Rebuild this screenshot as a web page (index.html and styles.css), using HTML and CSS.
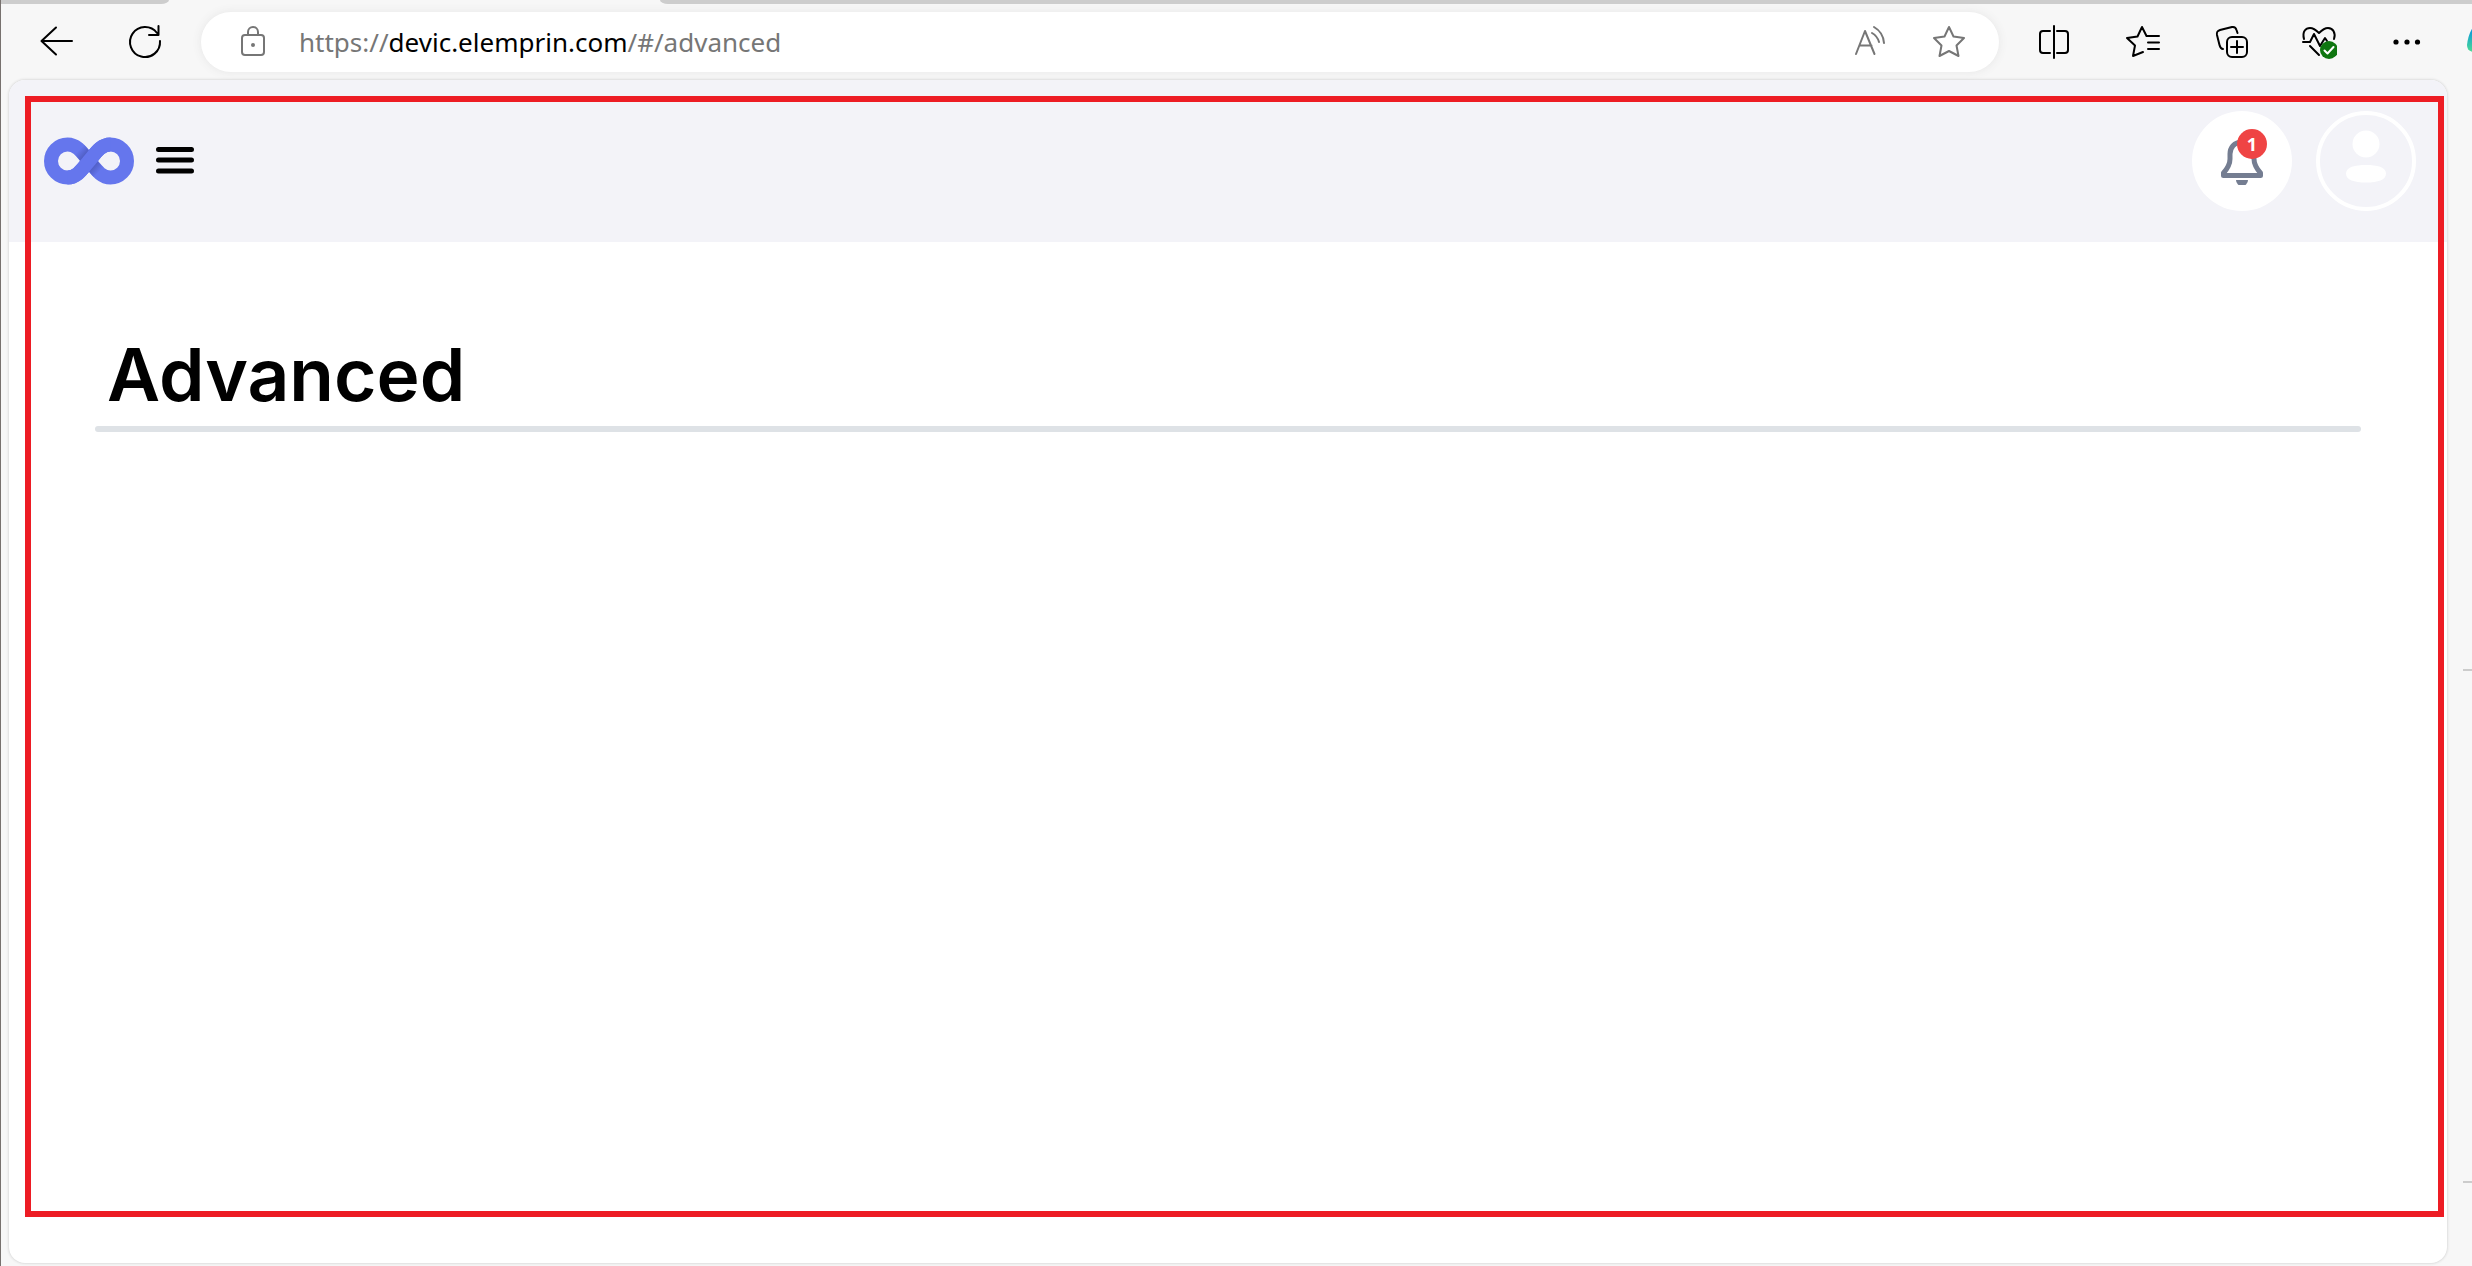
FILE: index.html
```html
<!DOCTYPE html>
<html lang="en">
<head>
<meta charset="utf-8">
<title>Advanced</title>
<link rel="stylesheet" href="styles.css">
</head>
<body>
<div class="tabstrip"><span class="tab-left"></span><span class="tab-right"></span></div>
<nav class="toolbar" aria-label="Browser">
  <button class="tool" aria-label="Back"><svg width="36" height="36" viewBox="0 0 36 36"><path d="M33 17H2.500M17 3.500L2.500 17L17 30.500"/></svg></button>
  <button class="tool" aria-label="Refresh"><svg width="36" height="36" viewBox="0 0 36 36"><path d="M33 17A15 15 0 1 1 30 9M31.500 2V11H22"/></svg></button>
  <div class="address">
    <button class="site" aria-label="Site information"><svg width="36" height="36" viewBox="0 0 36 36"><rect x="7" y="11" width="22" height="20" rx="3"/><path d="M13 11V8a5 5 0 0 1 10 0V11"/><circle class="solid" cx="18" cy="21" r="2"/></svg></button>
    <div class="url" role="textbox" contenteditable="true" spellcheck="false" aria-label="Address">https://<span class="host">devic.elemprin.com</span>/#/advanced</div>
    <button class="action" aria-label="Read aloud"><svg width="36" height="36" viewBox="-2 0 36 36"><path d="M3 30L12 7L21.500 30M6.500 21.500H18.500M19 9a15 15 0 0 1 7 9M21 3a20 20 0 0 1 10 16"/></svg></button>
    <button class="action" aria-label="Add to favorites"><svg width="36" height="36" viewBox="0 0 36 36"><path d="M18 3L22.500 12.500L33 14L25.500 21.500L27.500 32L18 27L8.500 32L10.500 21.500L3 14L13.500 12.500Z"/></svg></button>
  </div>
  <button class="tool" aria-label="Split screen"><svg width="36" height="36" viewBox="0 0 36 36"><path d="M18 2V34M14 7H7a3 3 0 0 0-3 3V26a3 3 0 0 0 3 3H14M21 7H29a3 3 0 0 1 3 3V26a3 3 0 0 1-3 3H21"/></svg></button>
  <button class="tool" aria-label="Favorites"><svg width="36" height="36" viewBox="-1 0 36 36"><path d="M18 28L8 32L10 21.500L2 14L12.500 12.500L17 3L21.500 12H34M23 18.500H34M23 25H34"/></svg></button>
  <button class="tool" aria-label="Collections"><svg width="36" height="36" viewBox="-2 0 36 36"><path d="M9 25C7 25 6 23 5.500 21L3 11C2.500 8 3 7 6 6L18 3C21 2.500 22 4 22.500 6L23.500 9"/><rect x="13" y="13" width="20" height="20" rx="5"/><path d="M23 17V29M17 23H29"/></svg></button>
  <button class="tool" aria-label="Browser essentials"><svg width="38" height="36" viewBox="-2 0 38 36"><path d="M3 15C1 7 5 4 9 4C13 4 16 7 18 9C20 7 23 4 27 4C32 4 35 9 33 15M2 18H9L13 10L19 22L24 14L26 17M9 22L18 31"/><circle class="ok" cx="28" cy="26" r="9"/><path class="tick" d="M23.500 26.500L26.500 29.500L32.500 23"/></svg></button>
  <button class="tool" aria-label="Settings and more"><svg width="36" height="36" viewBox="-2 0 36 36"><g class="solid"><circle cx="6" cy="18" r="2.600"/><circle cx="17" cy="18" r="2.600"/><circle cx="27.500" cy="18" r="2.600"/></g></svg></button>
  <button class="copilot" aria-label="Copilot"><svg width="36" height="36" viewBox="0 0 36 36"><defs><linearGradient id="cp" x2="0" y2="1"><stop offset="0.200" stop-color="#0b9bd8"/><stop offset="1" stop-color="#4cdb93"/></linearGradient></defs><path fill="url(#cp)" stroke="none" d="M9 1H30V28H8Q0 28 0 21Q1 11 6 3Z"/></svg></button>
</nav>
<div class="workspace">
  <div class="page">
    <header class="header">
      <a class="logo" href="#/" aria-label="Home"><svg width="90" height="48" viewBox="0 0 90 48">
        <defs>
          <linearGradient id="fold-a" gradientUnits="userSpaceOnUse" x1="42" y1="21" x2="34" y2="14"><stop offset="0" stop-color="#4a57b8"/><stop offset="1" stop-color="#6576ed"/></linearGradient>
          <linearGradient id="fold-b" gradientUnits="userSpaceOnUse" x1="48" y1="27" x2="56" y2="34"><stop offset="0" stop-color="#4a57b8"/><stop offset="1" stop-color="#6576ed"/></linearGradient>
        </defs>
        <path class="strand" d="M23.500 7.500A16.500 16.500 0 0 0 23.500 40.500C33 40.500 38 32.500 45 24C52 15.500 57 7.500 66.500 7.500A16.500 16.500 0 0 1 66.500 40.500C57 40.500 52 32.500 45 24C38 15.500 33 7.500 23.500 7.500Z"/>
        <path class="shade" stroke="url(#fold-a)" d="M35.500 12.500L45 24"/>
        <path class="shade" stroke="url(#fold-b)" d="M45 24L54.500 35.500"/>
        <path class="strand" d="M23.500 40.500C33 40.500 38 32.500 45 24C52 15.500 57 7.500 66.500 7.500"/>
      </svg></a>
      <button class="menu" aria-label="Menu"><svg width="38" height="28" viewBox="0 0 38 28"><path d="M2.500 3.500H35.500M2.500 14H35.500M2.500 25H35.500"/></svg></button>
      <button class="round bell" aria-label="Notifications"><svg width="44" height="48" viewBox="0 0 44 48"><path class="bell-body" d="M22 5C14 5 10 11 10 17V22C10 28 7 32 3.500 36V38.500H40.500V36C37 32 34 28 34 22V17C34 11 30 5 22 5Z"/><path class="clapper" d="M16 43H28A6 6 0 0 1 16 43Z"/></svg><span class="badge">1</span></button>
      <button class="round avatar" aria-label="Account"><svg width="42" height="54" viewBox="0 0 42 54"><circle cx="21" cy="14" r="13.500"/><path d="M21 35C32 35 41 37 41 43.500S33 52.500 21 52.500S1 50 1 43.500S10 35 21 35Z"/></svg></button>
    </header>
    <main class="content">
      <h1>Advanced</h1>
      <hr>
    </main>
    <div class="frame"></div>
  </div>
  <aside class="side"><span></span><span></span></aside>
</div>
</body>
</html>
```
FILE: styles.css
```css
* { box-sizing: border-box; }
body {
  margin: 0;
  min-height: 100vh;
  display: flex;
  flex-direction: column;
  background: #f7f7f7;
  border-left: 1px solid #77716e;
  font-family: "Noto Sans", "Open Sans", sans-serif;
}
button {
  padding: 0;
  border: 0;
  background: none;
  color: inherit;
  font: inherit;
  display: flex;
  align-items: center;
  justify-content: center;
  flex-shrink: 0;
}
svg { display: block; flex-shrink: 0; }
.tabstrip { display: flex; justify-content: space-between; height: 4px; }
.tabstrip span { background: #cdcdcd; }
.tab-left { width: 168px; border-bottom-right-radius: 8px 4px; }
.tab-right { width: calc(100% - 659px); border-bottom-left-radius: 8px 4px; }

.toolbar {
  display: flex;
  align-items: center;
  height: 76px;
  padding-left: 12px;
  overflow: hidden;
}
.toolbar svg {
  fill: none;
  stroke: currentColor;
  stroke-width: 2;
  stroke-linejoin: round;
  stroke-linecap: round;
}
.toolbar .solid { fill: currentColor; stroke: none; }
.toolbar .ok { fill: #0f7610; stroke: none; }
.toolbar .tick { stroke: #fff; stroke-width: 2; }
.tool { width: 88px; height: 60px; color: #000; }
.copilot { width: 22px; height: 60px; justify-content: flex-start; padding-left: 17px; }
.address {
  flex: 1;
  display: flex;
  align-items: center;
  height: 60px;
  margin: 0 11px 0 12px;
  padding: 0 10px 0 12px;
  border-radius: 30px;
  background: #fff;
  color: #767676;
  box-shadow: 0 0 10px #e6e6e6;
}
.site { width: 80px; height: 60px; }
.url { flex: 1; padding-left: 6px; font-size: 26px; line-height: 36px; white-space: nowrap; outline: 0; }
.host { color: #000; }
.action { width: 80px; height: 60px; }

.workspace { flex: 1; display: flex; padding: 0 0 3px 8px; }
.page {
  position: relative;
  flex: 1;
  min-width: 0;
  overflow: hidden;
  border-radius: 16px;
  background: #fff;
  box-shadow: 0 0 3px #c4c4c4;
}
.side { width: 25px; display: flex; flex-direction: column; align-items: flex-end; gap: 510px; padding-top: 589px; }
.side span { width: 9px; height: 2px; background: #ccc; }
.frame { position: absolute; inset: 16px 3px 46px 16px; border: 6px solid #ed1c24; pointer-events: none; }

.header {
  display: flex;
  align-items: center;
  height: 162px;
  padding: 0 31px 0 35px;
  background: #f3f3f8;
}
.strand { fill: none; stroke: #6576ed; stroke-width: 14; }
.shade { fill: none; stroke-width: 13; }
.menu { margin: 0 auto 0 22px; padding-bottom: 3px; }
.menu svg { stroke: #000; stroke-width: 5; stroke-linecap: round; }
.round { position: relative; width: 100px; height: 100px; border-radius: 50%; }
.bell { background: #fff; margin-right: 24px; }
.bell-body { fill: none; stroke: #747d91; stroke-width: 5; stroke-linejoin: round; }
.clapper { fill: #747d91; }
.badge {
  position: absolute;
  top: 18px;
  left: 45px;
  width: 30px;
  height: 30px;
  border-radius: 50%;
  background: #ef4444;
  color: #fff;
  font-size: 18px;
  font-weight: 700;
  line-height: 30px;
  text-align: center;
}
.avatar { border: 4px solid #fff; }
.avatar svg { fill: #fff; margin-bottom: 8px; }

.content { padding: 93px 86px 0; }
h1 {
  margin: 0;
  padding: 0 12px 11px;
  color: #000;
  font: 600 73px/80px Inter, sans-serif;
}
hr { margin: 0; height: 6px; border: 0; border-radius: 3px; background: #dee2e6; }
```
